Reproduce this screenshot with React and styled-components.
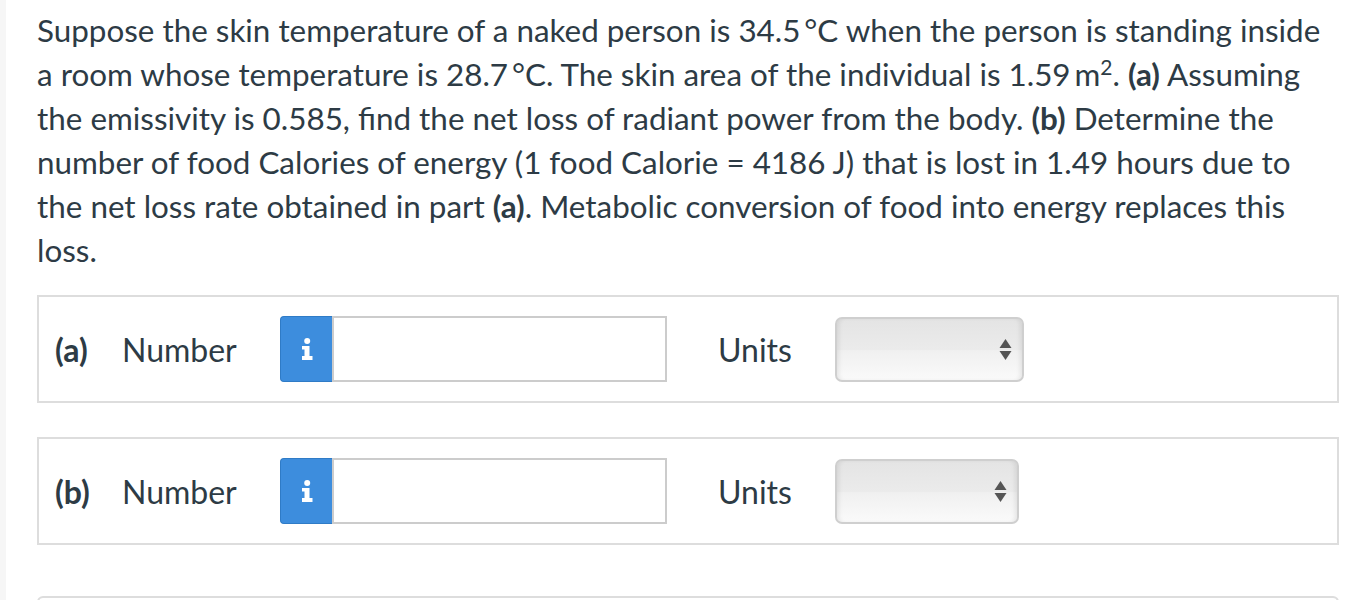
import React from "react";
import styled, { createGlobalStyle } from "styled-components";

const GlobalStyle = createGlobalStyle`
  html, body {
    margin: 0;
    padding: 0;
    background: #ffffff;
  }
  body {
    font-family: Lato, "Open Sans", sans-serif;
    color: #2d3b45;
  }
`;

const parts = [
  { key: "a", selectWidth: 189 },
  { key: "b", selectWidth: 184 },
];

const InfoGlyph = () => (
  <svg width="12" height="22" viewBox="0 0 12 22">
    <circle cx="6.2" cy="3" r="3" fill="#fff" />
    <path d="M1 8 H8.5 V18 H11.5 V22 H1 V18 H3.5 V11.5 H1 Z" fill="#fff" />
  </svg>
);

const App = () => {
  return (
    <>
      <GlobalStyle />
      <Page>
        <Gutter />
        <Content>
          <Question>
            Suppose the skin temperature of a naked person is 34.5&#8201;°C
            when the person is standing inside a room whose temperature is
            28.7&#8201;°C. The skin area of the individual is 1.59&#8201;m
            <sup>2</sup>. <b>(a)</b> Assuming the emissivity is 0.585, find
            the net loss of radiant power from the body. <b>(b)</b> Determine
            the number of food Calories of energy (1 food Calorie = 4186 J)
            that is lost in 1.49 hours due to the net loss rate obtained in
            part <b>(a)</b>. Metabolic conversion of food into energy replaces
            this loss.
          </Question>

          {parts.map((part) => (
            <AnswerBox key={part.key}>
              <PartLabel>({part.key})</PartLabel>
              <FieldLabel>Number</FieldLabel>
              <InfoButton type="button">
                <InfoGlyph />
              </InfoButton>
              <NumberInput type="text" />
              <UnitsLabel>Units</UnitsLabel>
              <UnitsSelect $width={part.selectWidth}>
                <svg width="13" height="23" viewBox="0 0 13 23">
                  <polygon points="6.5,1 12.5,10 0.5,10" fill="#555" />
                  <polygon points="0.5,13 12.5,13 6.5,22" fill="#555" />
                </svg>
              </UnitsSelect>
            </AnswerBox>
          ))}

          <NextBox />
        </Content>
      </Page>
    </>
  );
};

export default App;

const Page = styled.div`
  display: flex;
  height: 600px;
  overflow: hidden;
`;

const Gutter = styled.div`
  width: 6px;
  flex-shrink: 0;
  background: #f6f6f6;
`;

const Content = styled.div`
  width: 1302px;
  padding: 0 0 0 31px;
  height: 600px;
  overflow: hidden;
`;

const Question = styled.p`
  margin: 0;
  padding-top: 8px;
  font-size: 31.4px;
  line-height: 44px;

  sup {
    font-size: 21px;
    line-height: 0;
  }
  b {
    font-weight: 700;
  }
`;

const AnswerBox = styled.div`
  margin-top: 23px;
  border: 2px solid #dddddd;
  height: 104px;
  box-sizing: content-box;
  display: flex;
  align-items: center;
  padding-left: 16px;
  & + & {
    margin-top: 34px;
  }
`;

const PartLabel = styled.span`
  width: 67px;
  font-size: 32px;
  font-weight: 700;
`;

const FieldLabel = styled.span`
  width: 158px;
  font-size: 32px;
`;

const InfoButton = styled.button`
  width: 52px;
  height: 66px;
  display: flex;
  align-items: center;
  justify-content: center;
  background: #3d8ddd;
  border: 1px solid #2f7bc6;
  border-right: none;
  border-radius: 4px 0 0 4px;
  padding: 0;
`;

const NumberInput = styled.input`
  width: 335px;
  height: 66px;
  box-sizing: border-box;
  border: 2px solid #cccccc;
  outline: none;
  background: #fff;
  margin: 0;
`;

const UnitsLabel = styled.span`
  margin-left: 51px;
  width: 117px;
  font-size: 32px;
`;

const UnitsSelect = styled.div`
  width: ${(p) => p.$width}px;
  height: 65px;
  box-sizing: border-box;
  border: 2px solid #cfcfcf;
  border-radius: 7px;
  background: linear-gradient(
    to bottom,
    #e4e4e4 0%,
    #ebebeb 50%,
    #f0f0f0 52%,
    #fafafa 100%
  );
  box-shadow: inset 4px 0 4px -2px rgba(0, 0, 0, 0.08),
    inset -4px 0 4px -2px rgba(0, 0, 0, 0.08);
  display: flex;
  align-items: center;
  justify-content: flex-end;
  padding-right: 10px;
`;

const NextBox = styled.div`
  margin-top: 51px;
  height: 40px;
  border: 2px solid #dddddd;
  border-radius: 6px;
`;
